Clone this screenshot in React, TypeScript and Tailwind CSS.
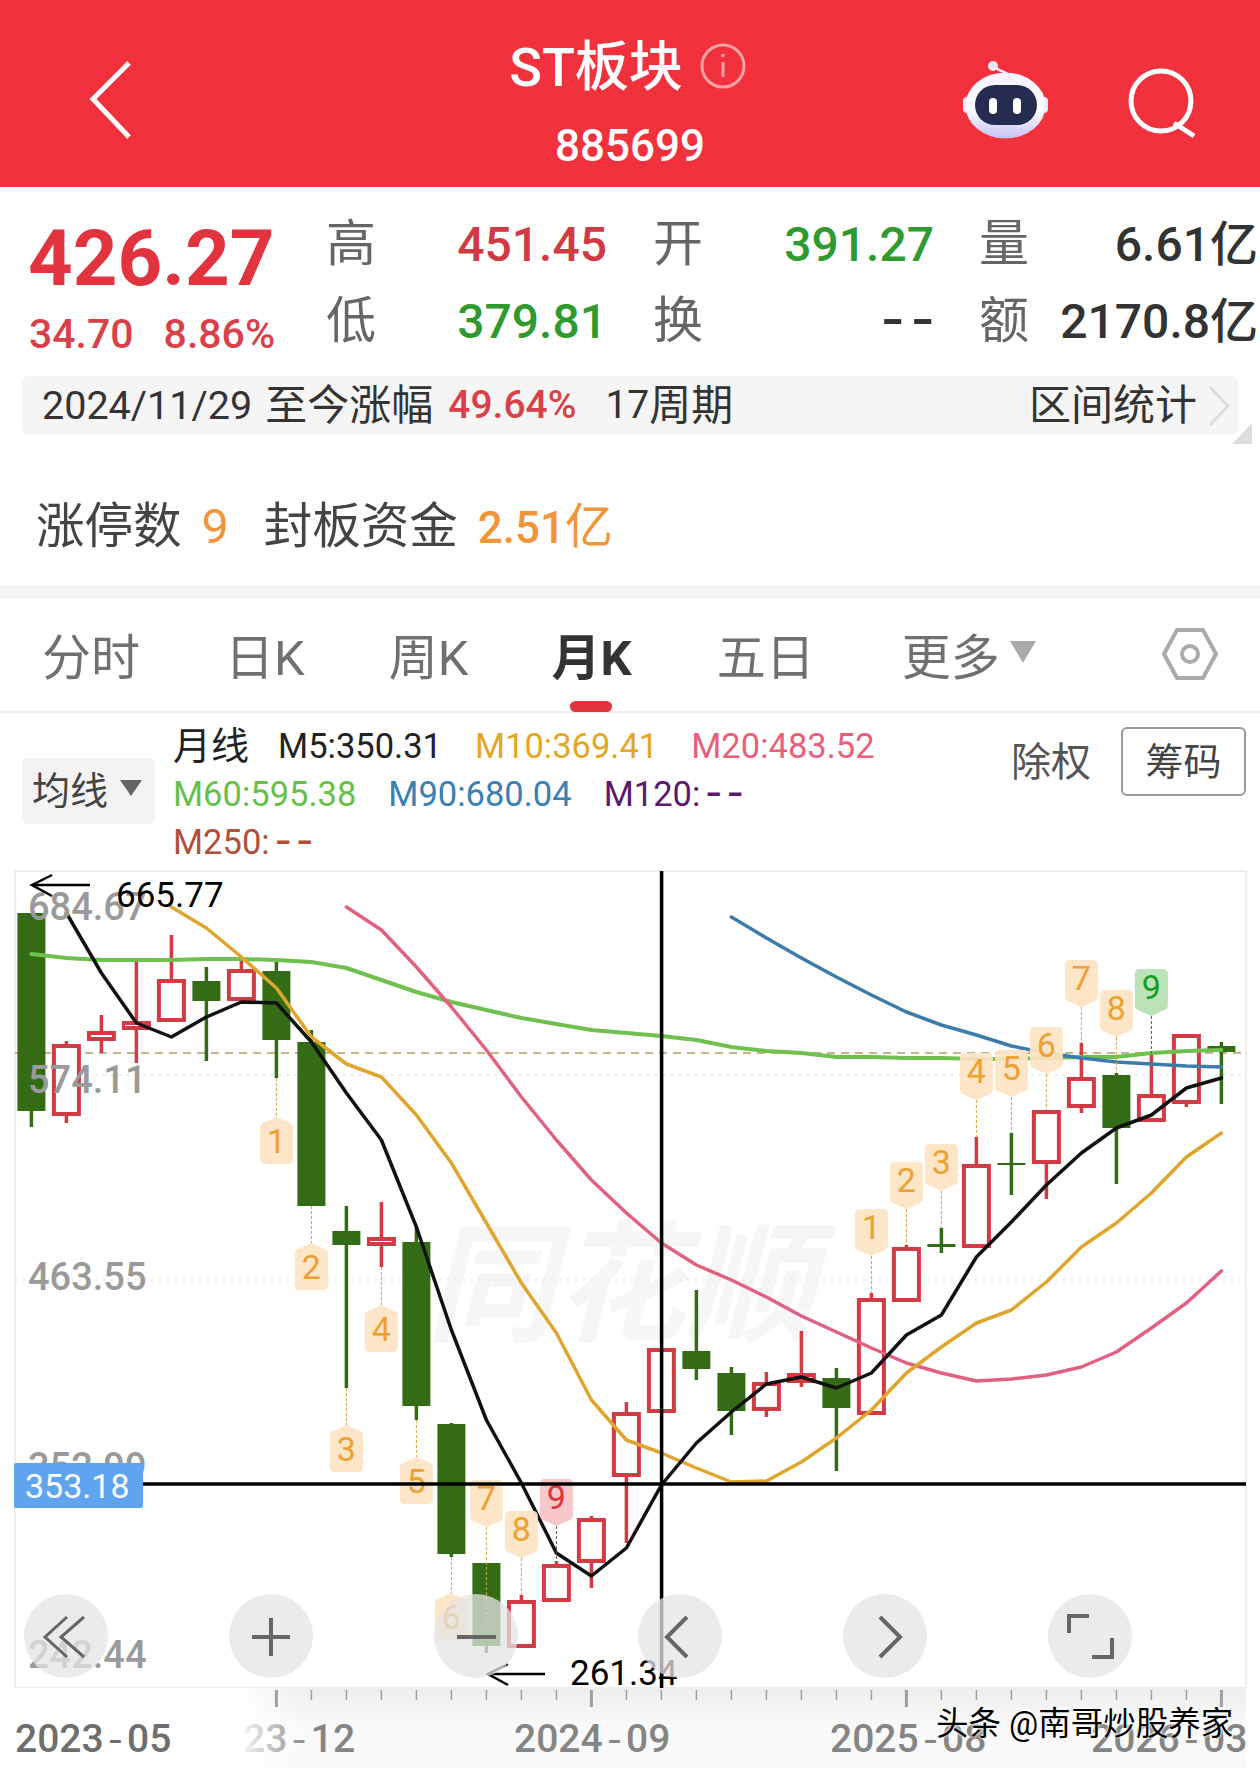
import React from "react";

const cx = (i: number) => 31.4 + 35 * i;

// kind, body top, body bottom, wick top, wick bottom
type Candle = ["r" | "g", number, number, number, number];
const candles: Candle[] = [
  ["g", 913, 1111, 913, 1127],
  ["r", 1044, 1116, 1041, 1123],
  ["r", 1031, 1041, 1015, 1053],
  ["r", 1021, 1030, 962, 1063],
  ["r", 979, 1022, 935, 1022],
  ["g", 981, 1001, 967, 1061],
  ["r", 969, 1001, 960, 1001],
  ["g", 971, 1040, 962, 1078],
  ["g", 1042, 1206, 1030, 1206],
  ["g", 1231, 1245, 1206, 1388],
  ["r", 1237, 1246, 1202, 1267],
  ["g", 1242, 1406, 1227, 1420],
  ["g", 1424, 1554, 1423, 1557],
  ["g", 1563, 1646, 1563, 1653],
  ["r", 1600, 1648, 1595, 1648],
  ["r", 1564, 1602, 1561, 1602],
  ["r", 1518, 1563, 1516, 1588],
  ["r", 1412, 1477, 1402, 1543],
  ["r", 1348, 1413, 1348, 1413],
  ["g", 1351, 1369, 1290, 1380],
  ["g", 1373, 1411, 1367, 1435],
  ["r", 1382, 1411, 1372, 1417],
  ["r", 1373, 1383, 1331, 1387],
  ["g", 1378, 1408, 1368, 1471],
  ["r", 1298, 1415, 1293, 1415],
  ["r", 1247, 1302, 1245, 1302],
  ["g", 1244, 1247, 1228, 1253],
  ["r", 1164, 1248, 1137, 1248],
  ["g", 1163, 1165, 1133, 1195],
  ["r", 1110, 1164, 1110, 1199],
  ["r", 1077, 1108, 1043, 1113],
  ["g", 1075, 1128, 1073, 1184],
  ["r", 1094, 1122, 1055, 1122],
  ["r", 1034, 1104, 1034, 1107],
  ["g", 1046, 1052, 1042, 1104],
];

// moving averages: first candle index, y per candle
const lines: { start: number; color: string; width: number; ys: number[] }[] = [
  {
    start: 0,
    color: "#70c050",
    width: 4,
    ys: [954, 958, 960, 960, 960, 959, 959, 960, 962, 968, 980, 992, 1002, 1010, 1018, 1024, 1030, 1033, 1036, 1040, 1047, 1051, 1053, 1057, 1057, 1058, 1058, 1059, 1059, 1058, 1057, 1057, 1053, 1051, 1050],
  },
  {
    start: 20,
    color: "#3c7cab",
    width: 3.5,
    ys: [917, 938, 958, 977, 995, 1012, 1025, 1035, 1046, 1053, 1058, 1062, 1064, 1066, 1067],
  },
  {
    start: 9,
    color: "#e0627f",
    width: 3.5,
    ys: [907, 930, 967, 1007, 1050, 1097, 1140, 1180, 1213, 1243, 1265, 1280, 1297, 1316, 1332, 1348, 1363, 1373, 1381, 1379, 1375, 1367, 1352, 1328, 1303, 1271],
  },
  {
    start: 4,
    color: "#e0a52c",
    width: 3.5,
    ys: [907, 928, 957, 988, 1037, 1064, 1077, 1115, 1163, 1223, 1283, 1333, 1400, 1440, 1453, 1468, 1482, 1481, 1462, 1438, 1410, 1373, 1347, 1323, 1310, 1282, 1247, 1223, 1193, 1157, 1133],
  },
  {
    start: 1,
    color: "#111111",
    width: 3.5,
    ys: [913, 973, 1023, 1037, 1017, 1002, 1003, 1042, 1093, 1140, 1227, 1330, 1420, 1483, 1553, 1576, 1548, 1485, 1443, 1412, 1384, 1377, 1388, 1373, 1335, 1315, 1257, 1222, 1185, 1153, 1128, 1115, 1088, 1078],
  },
];

// index, label, body top, tip direction, dashed line end, tone
const badges: [number, string, number, "up" | "down", number, string?][] = [
  [7, "1", 1117, "up", 1078],
  [8, "2", 1243, "up", 1206],
  [9, "3", 1425, "up", 1388],
  [10, "4", 1305, "up", 1267],
  [11, "5", 1457, "up", 1420],
  [12, "6", 1593, "up", 1557],
  [13, "7", 1480, "down", 1620],
  [14, "8", 1511, "down", 1595],
  [15, "9", 1479, "down", 1561, "pink"],
  [24, "1", 1209, "down", 1293],
  [25, "2", 1162, "down", 1245],
  [26, "3", 1144, "down", 1228],
  [27, "4", 1053, "down", 1137],
  [28, "5", 1050, "down", 1133],
  [29, "6", 1027, "down", 1110],
  [30, "7", 960, "down", 1043],
  [31, "8", 990, "down", 1073],
  [32, "9", 969, "down", 1055, "green"],
];

const tones: Record<string, { fill: string; text: string; dash: string }> = {
  orange: { fill: "#fde3c3", text: "#eea030", dash: "#d9a040" },
  pink: { fill: "#f6c2c4", text: "#e0333c", dash: "#555555" },
  green: { fill: "#b6e0b2", text: "#12a01e", dash: "#555555" },
};

const badgePath = (x: number, top: number, dir: "up" | "down") => {
  const l = x - 16.5;
  const r = x + 16.5;
  const b = top + 47;
  if (dir === "up") {
    return `M${x} ${top} L${r - 3} ${top + 6} Q${r} ${top + 7} ${r} ${top + 11} L${r} ${b - 5} Q${r} ${b} ${r - 5} ${b} L${l + 5} ${b} Q${l} ${b} ${l} ${b - 5} L${l} ${top + 11} Q${l} ${top + 7} ${l + 3} ${top + 6} Z`;
  }
  return `M${x} ${b} L${r - 3} ${b - 6} Q${r} ${b - 7} ${r} ${b - 11} L${r} ${top + 5} Q${r} ${top} ${r - 5} ${top} L${l + 5} ${top} Q${l} ${top} ${l} ${top + 5} L${l} ${b - 11} Q${l} ${b - 7} ${l + 3} ${b - 6} Z`;
};

const axisPrices: [string, number][] = [
  ["684.67", 920],
  ["574.11", 1093],
  ["463.55", 1290],
  ["352.99", 1480],
  ["242.44", 1668],
];

const Chart = () => (
  <section className="relative h-[828px] overflow-hidden">
    <div className="absolute left-[425px] top-[352px] text-[130px] leading-[150px] font-bold italic text-[#f6f6f6] whitespace-nowrap">
      同花顺
    </div>
    <svg viewBox="0 860 1260 828" className="absolute inset-0 h-[828px] w-[1260px]">
      <rect x="15" y="871" width="1231" height="817" fill="none" stroke="#eeeeee" strokeWidth="2" />
      <line x1="15" x2="1246" y1="1075" y2="1075" stroke="#e2e2e2" strokeWidth="1.5" strokeDasharray="2 6" />
      <line x1="15" x2="1246" y1="1280" y2="1280" stroke="#e2e2e2" strokeWidth="1.5" strokeDasharray="2 6" />
      <line x1="15" x2="1246" y1="1053" y2="1053" stroke="#c8b48c" strokeWidth="2" strokeDasharray="8 6" />

      {candles.map(([kind, top, bottom, wickTop, wickBottom], i) => {
        const x = cx(i);
        const color = kind === "r" ? "#d23a44" : "#336c14";
        return (
          <g key={i}>
            <line x1={x} x2={x} y1={wickTop} y2={wickBottom} stroke={color} strokeWidth="3.5" />
            {kind === "r" ? (
              <rect x={x - 12.5} y={top + 2} width="25" height={bottom - top - 4} fill="#ffffff" stroke={color} strokeWidth="4" />
            ) : (
              <rect x={x - 14} y={top} width="28" height={bottom - top} fill={color} />
            )}
          </g>
        );
      })}

      {lines.map((l) => (
        <polyline
          key={l.color}
          fill="none"
          stroke={l.color}
          strokeWidth={l.width}
          strokeLinejoin="round"
          strokeLinecap="round"
          points={l.ys.map((y, k) => `${cx(l.start + k)},${y}`).join(" ")}
        />
      ))}

      {badges.map(([i, label, top, dir, end, tone]) => {
        const x = cx(i);
        const t = tones[tone ?? "orange"];
        return (
          <g key={i}>
            <line
              x1={x}
              x2={x}
              y1={dir === "up" ? end : top + 47}
              y2={dir === "up" ? top : end}
              stroke={t.dash}
              strokeWidth="1"
              strokeDasharray="3 2"
            />
            <path d={badgePath(x, top, dir)} fill={t.fill} fillOpacity="0.92" />
            <text x={x} y={top + (dir === "up" ? 36 : 30)} textAnchor="middle" fontSize="34" fill={t.text}>
              {label}
            </text>
          </g>
        );
      })}

      {axisPrices.map(([label, y]) => (
        <text key={label} x="28" y={y} fontSize="38" fontWeight="500" fill="#9a9a9a">
          {label}
        </text>
      ))}

      <line x1="661.6" x2="661.6" y1="871" y2="1688" stroke="#000000" strokeWidth="3.5" />
      <line x1="143" x2="1246" y1="1484" y2="1484" stroke="#000000" strokeWidth="3.5" />

      <rect x="14" y="1463" width="129" height="45" rx="2" fill="#5fa4ee" />
      <text x="25" y="1498" fontSize="34" fill="#ffffff">
        353.18
      </text>

      <polyline points="52,875 32,885 52,896" fill="none" stroke="#000000" strokeWidth="2.5" />
      <line x1="32" x2="90" y1="885" y2="885" stroke="#000000" strokeWidth="2.5" />
      <text x="116" y="907" fontSize="35" fill="#000000">
        665.77
      </text>

      <polyline points="508,1664 488,1674 508,1685" fill="none" stroke="#000000" strokeWidth="2.5" />
      <line x1="488" x2="545" y1="1674" y2="1674" stroke="#000000" strokeWidth="2.5" />
      <text x="570" y="1685" fontSize="35" fill="#000000">
        261.34
      </text>
    </svg>

    <div className="absolute left-[24px] top-[734px] flex w-[1108px] justify-between">
      <ChartButton>
        <polyline points="43,23 21,43 43,63" />
        <polyline points="60,23 37,43 60,63" />
      </ChartButton>
      <ChartButton>
        <path d="M42 24 V62 M23 43 H61" strokeWidth="4" />
      </ChartButton>
      <ChartButton>
        <path d="M23 43 H62" strokeWidth="4" />
      </ChartButton>
      <ChartButton>
        <polyline points="49,23 29,43 49,63" strokeWidth="4" />
      </ChartButton>
      <ChartButton>
        <polyline points="37,23 57,43 37,63" strokeWidth="4" />
      </ChartButton>
      <ChartButton>
        <path d="M21 39 V22 H41 M64 44 V63 H44" strokeWidth="4" />
      </ChartButton>
    </div>
  </section>
);

const ChartButton = ({ children }: { children: React.ReactNode }) => (
  <div className="flex size-[84px] items-center justify-center rounded-full bg-[#e4e4e4]/75">
    <svg viewBox="0 0 84 84" className="size-[84px]" fill="none" stroke="#666666" strokeWidth="3">
      {children}
    </svg>
  </div>
);

const Dashes = () => (
  <span className="font-['Liberation_Mono',monospace] text-[1.3em] leading-none tracking-[-0.12em]">--</span>
);

const AxisLabel = ({ left, head, tail, className }: { left: string; head: string; tail: string; className?: string }) => (
  <div className={`absolute top-[29px] leading-[44px] ${left} ${className ?? ""}`}>
    {head}
    <span className="font-['Liberation_Mono',monospace]">-</span>
    {tail}
  </div>
);

const AxisBar = () => (
  <section className="relative h-[80px] w-[1246px] overflow-hidden bg-gradient-to-b from-[#eeeeee] via-[#fafafa] to-[#f8f8f8] text-[39px] font-medium text-[#858585]">
    <AxisLabel left="left-[243px]" head="23" tail="12" />
    <div className="absolute left-0 top-0 h-full w-[310px] bg-gradient-to-r from-white from-[76%] to-transparent" />
    <AxisLabel left="left-[15px]" head="2023" tail="05" className="text-[#6e6e6e]" />
    <AxisLabel left="left-[514px]" head="2024" tail="09" />
    <AxisLabel left="left-[830px]" head="2025" tail="08" />
    <AxisLabel left="left-[1091px]" head="2026" tail="03" />
    <svg viewBox="0 0 1246 80" className="absolute inset-0 h-[80px] w-[1246px]">
      {candles.map((_, i) =>
        i >= 7 ? (
          <line
            key={i}
            x1={cx(i)}
            x2={cx(i)}
            y1="2"
            y2={(i - 7) % 9 === 0 ? 19 : 12}
            stroke="#a0a0a0"
            strokeWidth={(i - 7) % 9 === 0 ? 3 : 1.5}
          />
        ) : null
      )}
    </svg>
    <div className="absolute left-[936px] top-[18px] whitespace-nowrap text-[32.5px] font-normal leading-[36px] text-black [text-shadow:0_0_3px_#ffffff,0_0_3px_#ffffff]">
      头条 @南哥炒股养家
    </div>
  </section>
);

const Header = () => (
  <header className="grid h-[187px] grid-cols-3 bg-[#f1313c] text-white">
    <div className="flex items-center pl-[88px]">
      <svg viewBox="0 0 44 78" className="mt-[12px] h-[78px] w-[44px]" fill="none" stroke="#ffffff" strokeWidth="5">
        <polyline points="41,2 5,38 41,76" />
      </svg>
    </div>
    <div className="flex flex-col items-center">
      <div className="-ml-[4px] mt-[36px] flex items-center gap-[16px]">
        <span className="text-[54px] font-medium leading-[64px]">ST板块</span>
        <svg viewBox="0 0 48 48" className="mb-[4px] size-[48px]" fill="none" stroke="#ffffff" strokeOpacity="0.55" strokeWidth="3">
          <circle cx="24" cy="24" r="21" />
          <path d="M24 20 V35 M24 12 V15" />
        </svg>
      </div>
      <div className="mt-[24px] text-[44px] font-medium leading-[44px]">885699</div>
    </div>
    <div className="flex items-center justify-end pr-[62px]">
      <svg viewBox="0 0 90 80" className="mt-[13px] h-[80px] w-[90px]">
        <defs>
          <linearGradient id="robotHead" x1="0" y1="0" x2="0" y2="1">
            <stop offset="0" stopColor="#f4f2ff" />
            <stop offset="0.55" stopColor="#ffffff" />
            <stop offset="1" stopColor="#c8c2f4" />
          </linearGradient>
        </defs>
        <path d="M36 8 C41 12 45 11 47 14" fill="none" stroke="#efeaff" strokeWidth="2.5" />
        <circle cx="33" cy="6" r="5" fill="#f4e6ec" />
        <rect x="3" y="37" width="8" height="16" rx="4" fill="#ece8ff" />
        <rect x="80" y="37" width="8" height="16" rx="4" fill="#ece8ff" />
        <ellipse cx="45.5" cy="45.5" rx="40" ry="33" fill="url(#robotHead)" />
        <rect x="15" y="25" width="62" height="40" rx="20" fill="#262c50" />
        <rect x="29" y="38" width="8" height="16" rx="4" fill="#ffffff" />
        <rect x="53" y="38" width="8" height="16" rx="4" fill="#ffffff" />
      </svg>
      <svg viewBox="0 0 70 72" className="ml-[78px] mt-[21px] h-[72px] w-[70px]" fill="none" stroke="#ffffff" strokeWidth="5">
        <circle cx="33" cy="33" r="30" />
        <path d="M46 55 L66 68" />
      </svg>
    </div>
  </header>
);

const Stat = ({ label, value, color, wide }: { label: string; value: React.ReactNode; color: string; wide?: boolean }) => (
  <>
    <span className={`text-[50px] leading-[77px] text-[#666666] ${wide ? "text-right" : "-ml-[2px]"}`}>{label}</span>
    <span className={`text-right text-[48px] font-medium leading-[77px] ${color}`}>{value}</span>
  </>
);

const Stats = () => (
  <section className="flex h-[189px]">
    <div className="w-[328px] pl-[28px]">
      <div className="mt-[27px] text-[78px] font-bold leading-[90px] text-[#e2343e]">426.27</div>
      <div className="ml-[1px] mt-[7px] flex gap-[30px] text-[41px] font-medium leading-[46px] text-[#d8414a]">
        <span>34.70</span>
        <span>8.86%</span>
      </div>
    </div>
    <div className="mt-[19px] grid grid-cols-[48px_231px_96px_231px_95px_229px] grid-rows-[77px_77px] whitespace-nowrap">
      <Stat label="高" value="451.45" color="text-[#d03a44]" />
      <Stat label="开" value="391.27" color="text-[#2f9a2f]" wide />
      <Stat label="量" value="6.61亿" color="text-[#333333]" wide />
      <Stat label="低" value="379.81" color="text-[#2f9a2f]" />
      <Stat label="换" value={<Dashes />} color="text-[#333333]" wide />
      <Stat label="额" value="2170.8亿" color="text-[#333333]" wide />
    </div>
  </section>
);

const RangeBar = () => (
  <div className="relative mx-[22px] flex h-[59px] items-center rounded-[6px] bg-[#f5f5f5] pl-[20px] text-[42px] leading-[59px] text-[#333333]">
    <span className="text-[39.5px]">2024/11/29</span>
    <span className="ml-[13px]">至今涨幅</span>
    <span className="ml-[15px] text-[39px] font-medium text-[#d8414a]">49.64%</span>
    <span className="ml-[29px] flex items-center">
      <span className="text-[39px]">17</span>周期
    </span>
    <span className="ml-auto">区间统计</span>
    <svg viewBox="0 0 22 40" className="ml-[11px] mr-[8px] h-[40px] w-[22px]" fill="none" stroke="#dddddd" strokeWidth="3">
      <polyline points="2,1 20,20 2,39" />
    </svg>
    <svg viewBox="0 0 20 21" className="absolute right-[-14px] top-[47px] h-[21px] w-[20px]">
      <polygon points="20,0 20,21 0,21" fill="#dddddd" />
    </svg>
  </div>
);

const LimitRow = () => (
  <section className="flex h-[150px] items-center pl-[36px] pt-[34px] text-[48.5px] leading-[60px] text-[#444444]">
    <span>涨停数</span>
    <span className="ml-[20px] text-[#f0953a]">9</span>
    <span className="ml-[35px]">封板资金</span>
    <span className="ml-[20px] text-[#f0953a]">
      <span className="text-[44px] font-medium">2.51</span>
      <span className="text-[48px]">亿</span>
    </span>
  </section>
);

const tabs: [string, string][] = [
  ["分时", ""],
  ["日K", "ml-[85px]"],
  ["周K", "ml-[84px]"],
  ["月K", "ml-[83px]"],
  ["五日", "ml-[85px]"],
  ["更多", "ml-[87px]"],
];

const Tabs = () => (
  <nav className="flex h-[114px] items-center border-b-2 border-[#eeeeee] pl-[42px] pt-[8px] text-[49px] leading-[60px] text-[#707070]">
    {tabs.map(([label, margin]) => (
      <span key={label} className={label === "月K" ? `relative ${margin} font-bold text-[#333333]` : margin}>
        {label}
        {label === "月K" && <span className="absolute left-[18px] top-[72px] h-[11px] w-[42px] rounded-full bg-[#e2343e]" />}
      </span>
    ))}
    <svg viewBox="0 0 26 22" className="mb-[14px] ml-[10px] h-[22px] w-[26px]">
      <polygon points="0,0 26,0 13,22" fill="#aaaaaa" />
    </svg>
    <svg viewBox="0 0 56 56" className="mb-[10px] ml-auto mr-[42px] size-[56px]" fill="none" stroke="#aaaaaa" strokeWidth="4">
      <polygon points="15,4 41,4 54,28 41,52 15,52 2,28" />
      <circle cx="28" cy="28" r="8" />
    </svg>
  </nav>
);

const MaRow = () => (
  <section className="flex h-[147px] text-[34.5px] leading-[48px]">
    <div className="ml-[22px] mt-[45px] flex h-[66px] w-[133px] items-center rounded-[6px] bg-[#f3f3f3] pl-[10px] text-[38px] text-[#444444]">
      均线
      <svg viewBox="0 0 22 16" className="ml-[12px] mb-[6px] h-[16px] w-[22px]">
        <polygon points="0,0 22,0 11,16" fill="#666666" />
      </svg>
    </div>
    <div className="ml-[18px] mt-[9px] whitespace-nowrap">
      <div className="flex">
        <span className="text-[38px] text-[#222222]">月线</span>
        <span className="ml-[29px] text-[#222222]">M5:350.31</span>
        <span className="ml-[33px] text-[#e0a825]">M10:369.41</span>
        <span className="ml-[33px] text-[#e8607a]">M20:483.52</span>
      </div>
      <div className="flex">
        <span className="text-[#66c04a]">M60:595.38</span>
        <span className="ml-[32px] text-[#3a80b0]">M90:680.04</span>
        <span className="ml-[32px] text-[#5a1a6a]">
          M120:
          <Dashes />
        </span>
      </div>
      <div className="text-[#b0503a]">
        M250:
        <Dashes />
      </div>
    </div>
    <div className="ml-auto mr-[14px] mt-[14px] flex items-start text-[40px] text-[#555555]">
      <span className="mt-[12px]">除权</span>
      <span className="ml-[30px] flex h-[69px] w-[125px] items-center justify-center rounded-[6px] border-2 border-[#999999] text-[38px] text-[#444444]">
        筹码
      </span>
    </div>
  </section>
);

export default function App() {
  return (
    <div className="h-[1768px] w-[1260px] overflow-hidden bg-white font-[Roboto,'Noto_Sans_CJK_SC',sans-serif]">
      <Header />
      <Stats />
      <RangeBar />
      <LimitRow />
      <div className="h-[14px] bg-[#f5f5f5]" />
      <Tabs />
      <MaRow />
      <Chart />
      <AxisBar />
    </div>
  );
}
